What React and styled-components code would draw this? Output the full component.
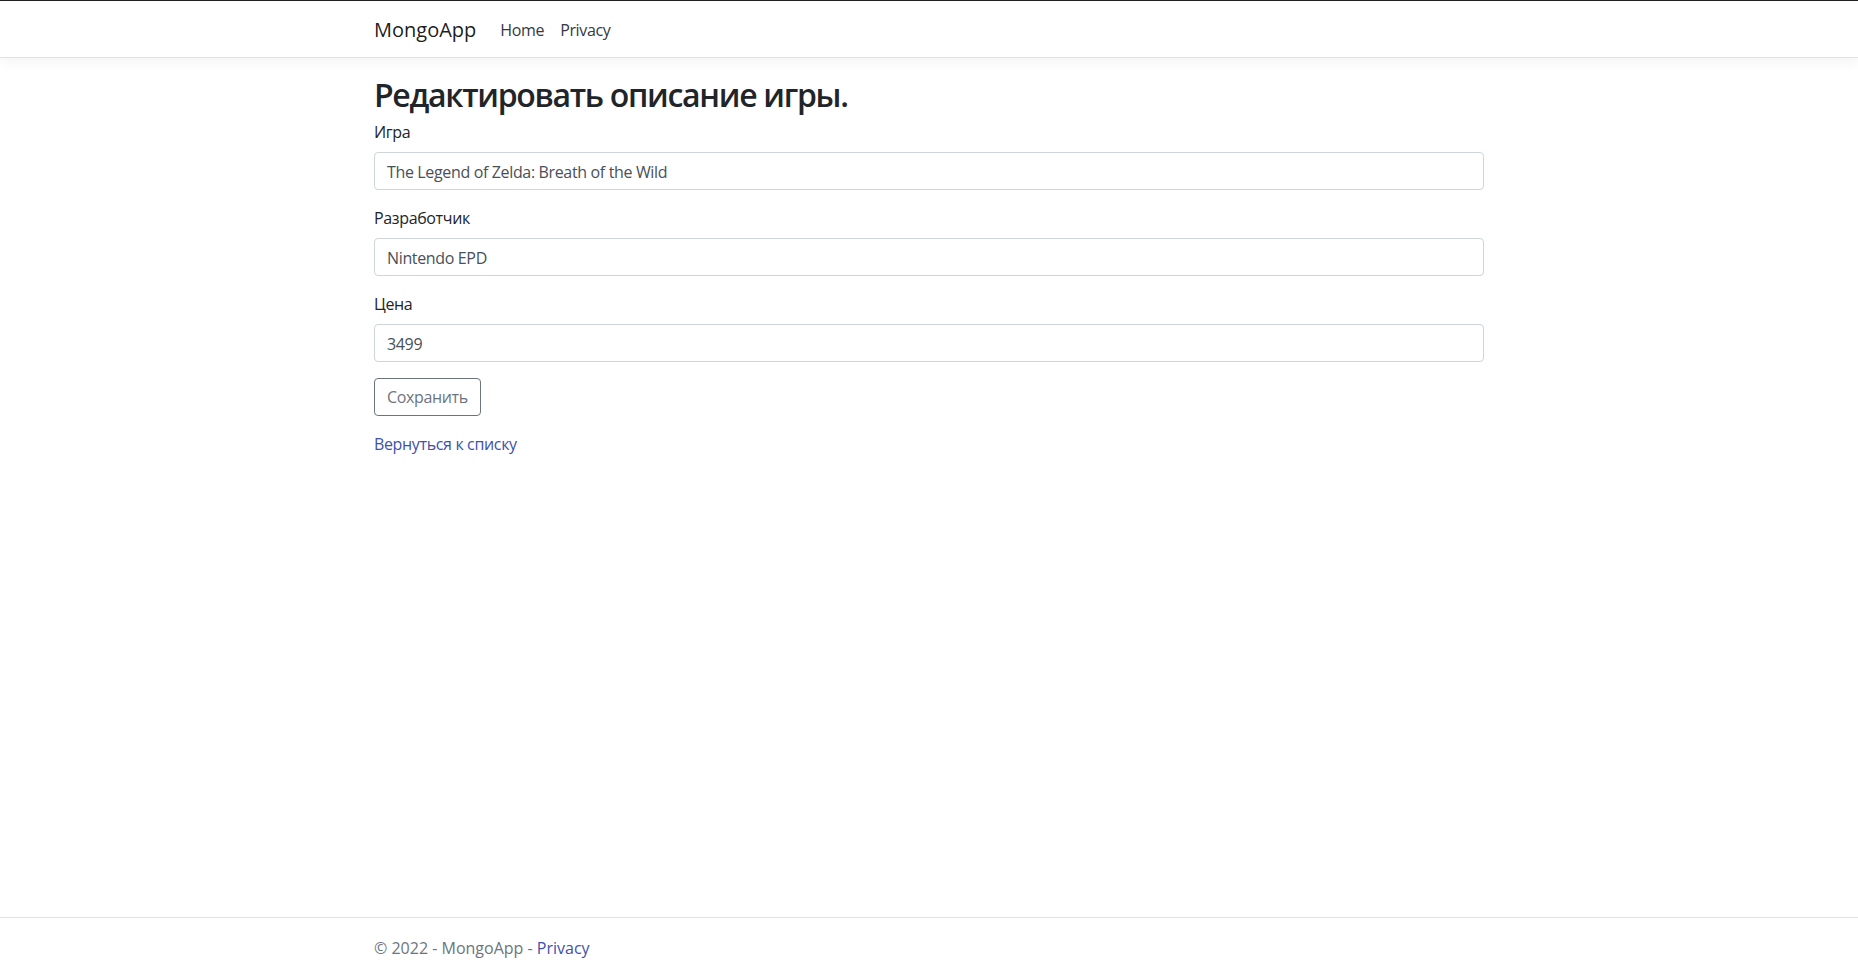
import React from "react";
import styled, { createGlobalStyle } from "styled-components";

const GlobalStyle = createGlobalStyle`
  * { box-sizing: border-box; }
  html, body { margin: 0; padding: 0; }
  body {
    font-family: "Open Sans", "Noto Sans", "Liberation Sans", sans-serif;
    font-size: 16px;
    line-height: 1.5;
    letter-spacing: -0.35px;
    color: #212529;
    background: #fff;
  }
`;

const Page = styled.div`
  min-height: 100vh;
  display: flex;
  flex-direction: column;
  border-top: 1px solid #222;
`;

const Container = styled.div`
  width: 1140px;
  padding: 0 15px;
  margin: 0 auto;
`;

const NavBar = styled.header`
  border-bottom: 1px solid #dee2e6;
  box-shadow: 0 4px 12px rgba(0, 0, 0, 0.05);
  margin-bottom: 16px;
  background: #fff;
`;

const NavInner = styled(Container)`
  display: flex;
  align-items: center;
  height: 56px;
  padding-top: 1px;
`;

const Brand = styled.a`
  font-size: 20px;
  letter-spacing: 0;
  color: rgba(0, 0, 0, 0.9);
  text-decoration: none;
  margin-right: 16px;
`;

const NavLink = styled.a`
  padding: 8px;
  color: #343a40;
  text-decoration: none;
`;

const Main = styled.main`
  flex: 1;
`;

const Title = styled.h2`
  font-size: 32px;
  font-weight: 600;
  line-height: 42px;
  letter-spacing: -1.3px;
  margin: 0 0 4px;
`;

const FormGroup = styled.div`
  margin-bottom: 16px;
`;

const Label = styled.label`
  display: block;
  margin-bottom: 8px;
`;

const Input = styled.input`
  display: block;
  width: 100%;
  height: 38px;
  padding: 7px 12px 5px;
  font: inherit;
  letter-spacing: inherit;
  color: #495057;
  border: 1px solid #ced4da;
  border-radius: 4px;
  background: #fff;
`;

const Button = styled.button`
  height: 38px;
  padding: 6px 12px;
  font: inherit;
  letter-spacing: inherit;
  color: #6c757d;
  background: #fff;
  border: 1px solid #6c757d;
  border-radius: 4px;
  cursor: pointer;
`;

const BackLink = styled.a`
  display: inline-block;
  margin-top: 16px;
  color: #4051aa;
  text-decoration: none;
`;

const Footer = styled.footer`
  border-top: 1px solid #dee2e6;
  line-height: 60px;
  letter-spacing: 0;
  color: #6c757d;
  white-space: nowrap;
  a {
    color: #4051aa;
    text-decoration: none;
  }
`;

const fields = [
  { id: "name", label: "Игра", value: "The Legend of Zelda: Breath of the Wild" },
  { id: "dev", label: "Разработчик", value: "Nintendo EPD" },
  { id: "price", label: "Цена", value: "3499" },
];

export default function App() {
  return (
    <>
      <GlobalStyle />
      <Page>
        <NavBar>
          <NavInner>
            <Brand href="#">MongoApp</Brand>
            <NavLink href="#">Home</NavLink>
            <NavLink href="#">Privacy</NavLink>
          </NavInner>
        </NavBar>
        <Main>
          <Container>
            <Title>Редактировать описание игры.</Title>
            <form onSubmit={(e) => e.preventDefault()}>
              {fields.map((f) => (
                <FormGroup key={f.id}>
                  <Label htmlFor={f.id}>{f.label}</Label>
                  <Input id={f.id} defaultValue={f.value} />
                </FormGroup>
              ))}
              <Button type="submit">Сохранить</Button>
            </form>
            <BackLink href="#">Вернуться к списку</BackLink>
          </Container>
        </Main>
        <Footer>
          <Container>
            © 2022 - MongoApp - <a href="#">Privacy</a>
          </Container>
        </Footer>
      </Page>
    </>
  );
}
